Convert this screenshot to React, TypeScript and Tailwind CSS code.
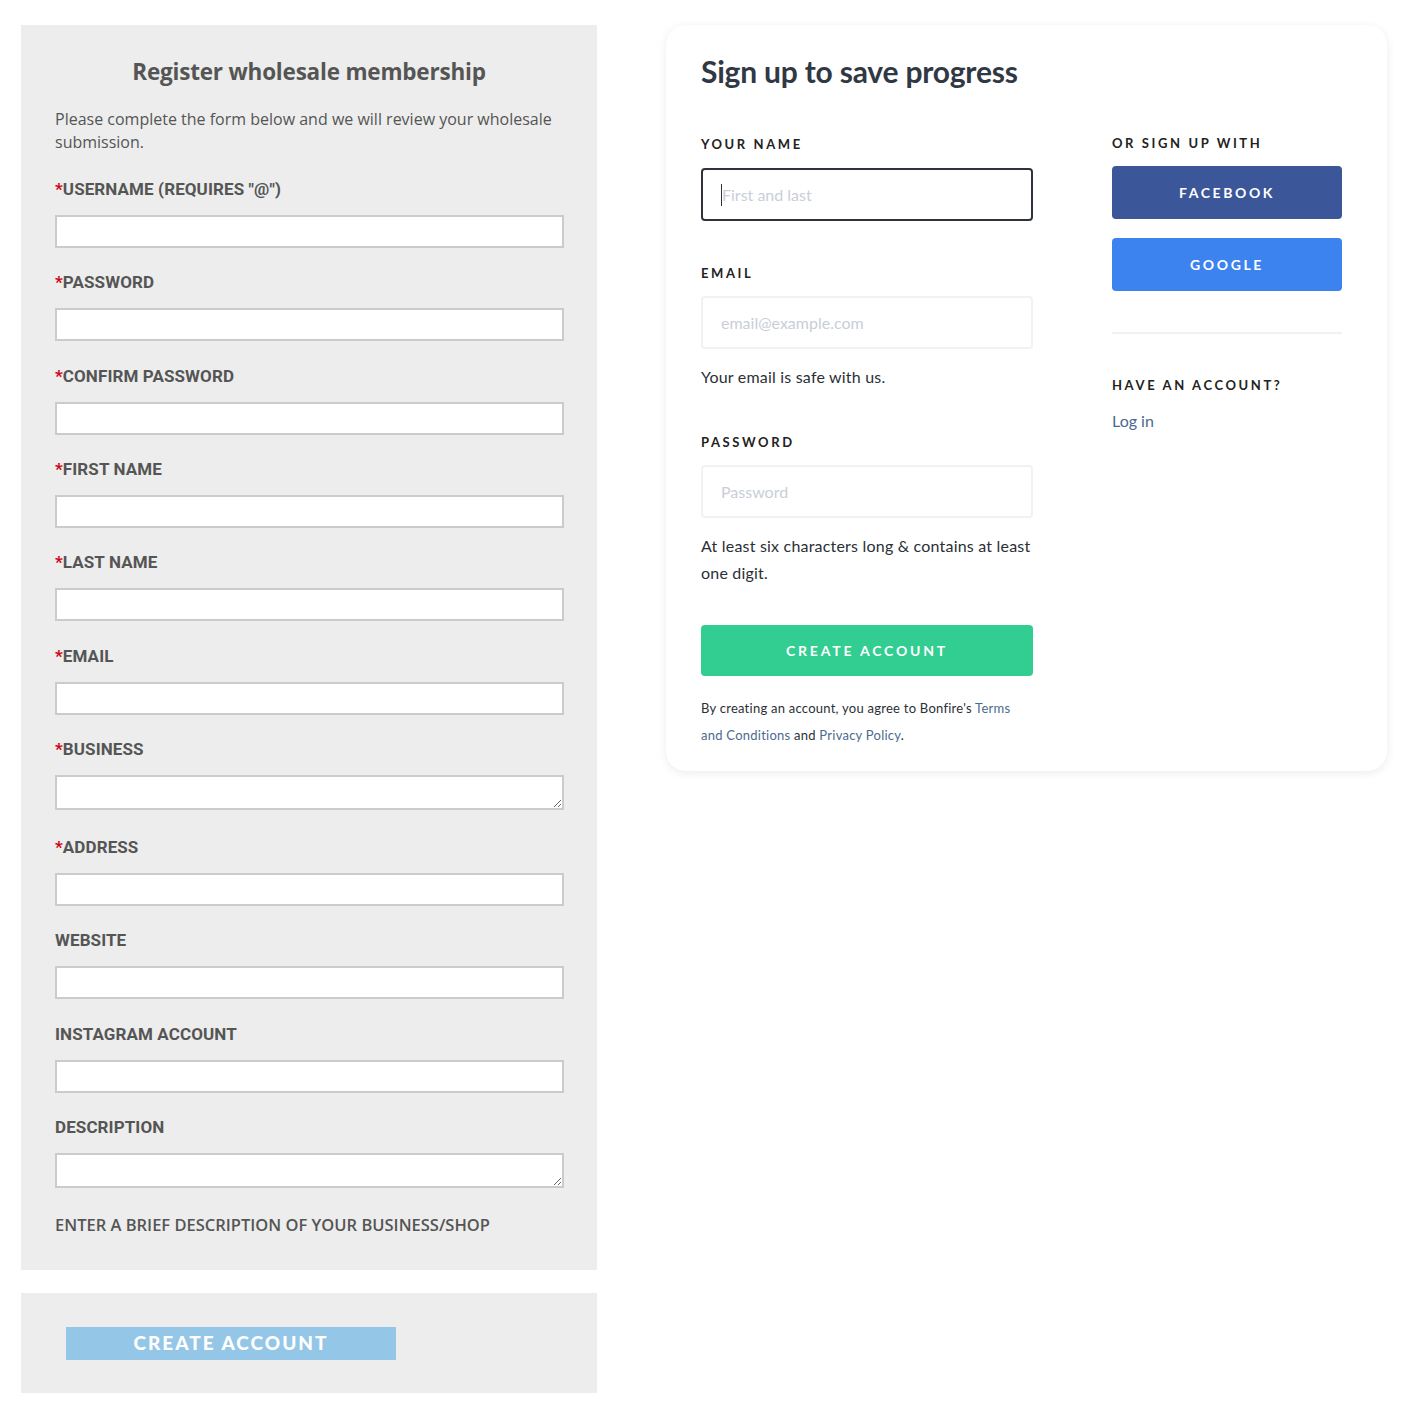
import React from 'react';

const leftFields: { label: string; required?: boolean; kind?: 'textarea'; extra?: boolean }[] = [
  { label: 'USERNAME (REQUIRES "@")', required: true },
  { label: 'PASSWORD', required: true },
  { label: 'CONFIRM PASSWORD', required: true },
  { label: 'FIRST NAME', required: true },
  { label: 'LAST NAME', required: true },
  { label: 'EMAIL', required: true },
  { label: 'BUSINESS', required: true, kind: 'textarea', extra: true },
  { label: 'ADDRESS', required: true },
  { label: 'WEBSITE' },
  { label: 'INSTAGRAM ACCOUNT' },
  { label: 'DESCRIPTION', kind: 'textarea' },
];

function WholesaleForm() {
  return (
    <div className="w-[576px] shrink-0 font-['Roboto',sans-serif] text-[#555]">
      <div className="bg-[#ecedec] px-[34px] pt-[32px] pb-[35px]">
        <h2 className="text-center text-[22.5px] font-bold leading-[30px] tracking-[-0.2px] text-[#555] font-['Open_Sans',sans-serif]">
          Register wholesale membership
        </h2>
        <p className="mt-[21px] text-[16px] leading-[23px] text-[#555] font-['Open_Sans',sans-serif]">
          Please complete the form below and we will review your wholesale submission.
        </p>

        <div className="mt-[25px] flex flex-col gap-[24.33px]">
          {leftFields.map((f) => (
            <div key={f.label} className={`flex flex-col gap-[16px] ${f.extra ? 'pb-[2.67px]' : ''}`}>
              <label className="text-[17px] font-bold leading-[20px] tracking-[0.1px] text-[#555]">
                {f.required && <span className="text-[#d0021b]">*</span>}
                {f.label}
              </label>
              {f.kind === 'textarea' ? (
                <textarea
                  rows={1}
                  className="block h-[35px] w-[509px] resize-y border-2 border-[#cbcbcb] bg-white outline-none"
                />
              ) : (
                <input
                  type="text"
                  className="block h-[33px] w-[509px] border-2 border-[#cbcbcb] bg-white outline-none"
                />
              )}
            </div>
          ))}
        </div>

        <p className="mt-[27px] text-[16.5px] font-semibold leading-[20px] text-[#555] font-['Open_Sans',sans-serif]">
          ENTER A BRIEF DESCRIPTION OF YOUR BUSINESS/SHOP
        </p>
      </div>

      <div className="mt-[23px] bg-[#ecedec] px-[45px] pt-[34px] pb-[33px]">
        <button className="flex h-[33px] w-[330px] items-center justify-center bg-[#94c6e8] text-[19px] font-black tracking-[2px] text-white font-['Lato',sans-serif]">
          CREATE ACCOUNT
        </button>
      </div>
    </div>
  );
}

function SignupCard() {
  const labelCls =
    "text-[13px] font-bold leading-[16px] tracking-[2.6px] text-[#222]";
  const inputCls =
    "mt-[15px] block h-[53px] w-full rounded-[4px] border-2 border-[#f1f2f4] px-[18px] text-[16px] outline-none placeholder:text-[#c9ced8]";
  return (
    <div className="w-[721px] shrink-0 rounded-[20px] bg-white pl-[35px] pr-[45px] pt-[28px] pb-[22px] shadow-[0_2px_10px_rgba(0,0,0,0.08)] font-['Lato',sans-serif] text-[#2f3640]">
      <h1 className="text-[30px] font-bold leading-[36px] tracking-[-0.2px] text-[#303844]">
        Sign up to save progress
      </h1>

      <div className="mt-[47px] flex gap-[79px]">
        <div className="w-[332px]">
          <div className={labelCls}>YOUR NAME</div>
          <div className="mt-[16px] flex h-[53px] items-center rounded-[4px] border-2 border-[#2e333a] px-[18px]">
            <span className="h-[22px] w-px bg-[#333]" />
            <input
              placeholder="First and last"
              className="w-full text-[16px] outline-none placeholder:text-[#c9ced8]"
            />
          </div>

          <div className={`${labelCls} mt-[44px]`}>EMAIL</div>
          <input placeholder="email@example.com" className={inputCls} />
          <p className="mt-[17px] text-[16px] leading-[22px] tracking-[0.2px] text-[#2b2f36]">Your email is safe with us.</p>

          <div className={`${labelCls} mt-[46px]`}>PASSWORD</div>
          <input placeholder="Password" className={inputCls} />
          <p className="mt-[14px] text-[16px] leading-[27px] tracking-[0.2px] text-[#2b2f36]">
            At least six characters long &amp; contains at least one digit.
          </p>

          <button className="mt-[39px] flex h-[51px] w-full items-center justify-center rounded-[4px] bg-[#32cd91] text-[14px] font-bold tracking-[2.8px] text-white">
            CREATE ACCOUNT
          </button>

          <p className="mt-[19px] text-[13px] leading-[27px] tracking-[0.25px] text-[#2b2f36]">
            By creating an account, you agree to Bonfire's{' '}
            <a className="text-[#4b6a8e]">Terms</a>{' '}
            <a className="text-[#4b6a8e]">and Conditions</a> and{' '}
            <a className="text-[#4b6a8e]">Privacy Policy</a>.
          </p>
        </div>

        <div className="w-[230px]">
          <div className={`${labelCls} -mt-[1px]`}>OR SIGN UP WITH</div>
          <button className="mt-[15px] flex h-[53px] w-full items-center justify-center rounded-[4px] bg-[#3b5799] text-[14px] font-bold tracking-[2.6px] text-white">
            FACEBOOK
          </button>
          <button className="mt-[19px] flex h-[53px] w-full items-center justify-center rounded-[4px] bg-[#3d83f0] text-[14px] font-bold tracking-[2.6px] text-white">
            GOOGLE
          </button>
          <div className="mt-[41px] h-[2px] w-full bg-[#f1f2f4]" />
          <div className={`${labelCls} mt-[43px]`}>HAVE AN ACCOUNT?</div>
          <a className="mt-[18px] block text-[16px] leading-[20px] text-[#4b6a8e]">Log in</a>
        </div>
      </div>
    </div>
  );
}

export default function App() {
  return (
    <div className="min-h-screen bg-white pl-[21px] pt-[25px]">
      <div className="flex items-start gap-[69px]">
        <WholesaleForm />
        <SignupCard />
      </div>
    </div>
  );
}
